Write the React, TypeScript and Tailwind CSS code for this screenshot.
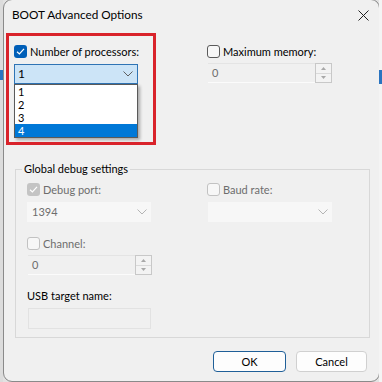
import React from "react";

function Check({ checked, disabled }: { checked?: boolean; disabled?: boolean }) {
  if (checked) {
    return (
      <div
        className={`w-[13px] h-[13px] rounded-[3px] flex items-center justify-center shrink-0 ${
          disabled ? "bg-[#c4c4c4]" : "bg-[#005fb8]"
        }`}
      >
        <svg width="9" height="9" viewBox="0 0 9 9">
          <path d="M1 4.8 L3.4 7 L8 1.8" fill="none" stroke="white" strokeWidth="1.2" />
        </svg>
      </div>
    );
  }
  return (
    <div
      className={`w-[13px] h-[13px] rounded-[3px] border shrink-0 ${
        disabled ? "border-[#c2c2c2] bg-[#f7f7f7]" : "border-[#5a5a5a] bg-[#f7f7f7]"
      }`}
    />
  );
}

function Chevron({ color = "#606060" }: { color?: string }) {
  return (
    <svg width="10" height="6" viewBox="0 0 10 6">
      <path d="M0.5 0.5 L5 5 L9.5 0.5" fill="none" stroke={color} strokeWidth="1" />
    </svg>
  );
}

function Spinner({ value }: { value: string }) {
  return (
    <div className="flex h-[20px] w-[124px]">
      <div className="flex-1 bg-[#f0f0f0] border-b border-[#fbfbfb] border-t border-t-[#e4e4e4] flex items-center pl-[4px] text-[#6d6d6d]">
        {value}
      </div>
      <div className="w-[17px] border border-[#c8c8c8] bg-[#f3f3f3] flex flex-col">
        <div className="flex-1 flex items-center justify-center border-b border-[#dadada]">
          <svg width="5" height="3" viewBox="0 0 5 3">
            <path d="M0 3 L2.5 0 L5 3 Z" fill="#a8a8a8" />
          </svg>
        </div>
        <div className="flex-1 flex items-center justify-center">
          <svg width="5" height="3" viewBox="0 0 5 3">
            <path d="M0 0 L2.5 3 L5 0 Z" fill="#a8a8a8" />
          </svg>
        </div>
      </div>
    </div>
  );
}

function DisabledCombo({ value }: { value?: string }) {
  return (
    <div className="h-[20px] w-[124px] bg-[#f7f7f7] flex items-center justify-between pl-[5px] pr-[4px] text-[#6d6d6d]">
      <span>{value}</span>
      <Chevron color="#b4b4b4" />
    </div>
  );
}

export default function App() {
  return (
    <div className="w-[382px] h-[382px] overflow-hidden bg-[#e2e2e2] relative flex text-[11px] leading-[16px] text-black whitespace-nowrap font-['Lato','Noto_Sans',sans-serif]">
      {/* background window strip left */}
      <div className="w-[3px] h-full flex flex-col bg-[#dcdcdc]">
        <div className="h-[70px]" />
        <div className="h-[10px] bg-[#2a74c0]" />
      </div>
      {/* dialog */}
      <div className="ml-[1px] w-[375px] h-[381px] bg-[#f0f0f0] rounded-[8px] outline outline-1 outline-[#8a8a8a] flex flex-col">
        {/* title bar */}
        <div className="h-[30px] flex items-center justify-between pl-[8px] pr-[10px] text-[11.75px]">
          <span>BOOT Advanced Options</span>
          <svg width="11" height="11" viewBox="0 0 11 11">
            <path d="M0.5 0.5 L10.5 10.5 M10.5 0.5 L0.5 10.5" stroke="#222" strokeWidth="1" />
          </svg>
        </div>
        {/* top row */}
        <div className="mt-[15px] flex pl-[10px]">
          <div className="w-[124px] flex flex-col">
            <div className="flex items-center gap-[3px] h-[13px]">
              <Check checked />
              <span>Number of processors:</span>
            </div>
            <div className="relative mt-[6px]">
              <div className="h-[20px] w-[124px] bg-[#cce4f7] border border-[#2f74b5] flex items-center justify-between pl-[3px] pr-[4px] text-[12px]">
                <span>1</span>
                <Chevron />
              </div>
              <div className="absolute left-0 top-[20px] w-[124px] h-[54px] bg-white border border-[#5a5a5a] shadow-[2px_2px_3px_rgba(0,0,0,0.3)] flex flex-col leading-[13px] text-[11px]">
                <div className="h-[13px] pl-[3px]">1</div>
                <div className="h-[13px] pl-[3px]">2</div>
                <div className="h-[13px] pl-[3px]">3</div>
                <div className="h-[13px] pl-[3px] bg-[#0078d7] text-white">4</div>
              </div>
            </div>
          </div>
          <div className="ml-[69px] flex flex-col">
            <div className="flex items-center gap-[3px] h-[13px]">
              <Check />
              <span>Maximum memory:</span>
            </div>
            <div className="mt-[5px] ml-[1px]">
              <Spinner value="0" />
            </div>
          </div>
        </div>
        {/* group box */}
        <fieldset className="mt-[77px] ml-[11px] w-[355px] border border-[#d8d8d8] pb-[8px]">
          <legend className="ml-[6px] px-[2px] leading-[16px]">Global debug settings</legend>
          <div className="pl-[11px] mt-[6px] flex">
            <div className="w-[124px] flex flex-col">
              <div className="flex items-center gap-[3px] h-[13px] text-[#6d6d6d]">
                <Check checked disabled />
                <span>Debug port:</span>
              </div>
              <div className="mt-[6px]">
                <DisabledCombo value="1394" />
              </div>
            </div>
            <div className="ml-[56px] flex flex-col">
              <div className="flex items-center gap-[3px] h-[13px] text-[#6d6d6d]">
                <Check disabled />
                <span>Baud rate:</span>
              </div>
              <div className="mt-[6px] ml-[1px]">
                <DisabledCombo />
              </div>
            </div>
          </div>
          <div className="pl-[11px] mt-[15px] flex flex-col">
            <div className="flex items-center gap-[3px] h-[13px] text-[#6d6d6d]">
              <Check disabled />
              <span>Channel:</span>
            </div>
            <div className="mt-[5px] ml-[1px]">
              <Spinner value="0" />
            </div>
            <div className="mt-[13px]">USB target name:</div>
            <div className="mt-[4px] ml-[1px] w-[123px] h-[21px] bg-[#f0f0f0] border border-[#e2e2e2]" />
          </div>
        </fieldset>
        {/* buttons */}
        <div className="mt-[13px] flex justify-end gap-[10px] pr-[12px]">
          <button className="w-[73px] h-[21px] rounded-[4px] bg-[#fdfdfd] border border-[#1f5f98] flex items-center justify-center">
            OK
          </button>
          <button className="w-[71px] h-[21px] rounded-[4px] bg-[#fdfdfd] border border-[#d0d0d0] flex items-center justify-center">
            Cancel
          </button>
        </div>
      </div>
      {/* background strip right */}
      <div className="flex-1 h-full flex flex-col bg-[#f4f4f4]">
        <div className="h-[70px]" />
        <div className="h-[14px] bg-[#2a74c0]" />
      </div>
      {/* annotation */}
      <div className="absolute left-[6px] top-[33px] w-[150px] h-[112px] border-[3px] border-[#d9232b] pointer-events-none" />
    </div>
  );
}
